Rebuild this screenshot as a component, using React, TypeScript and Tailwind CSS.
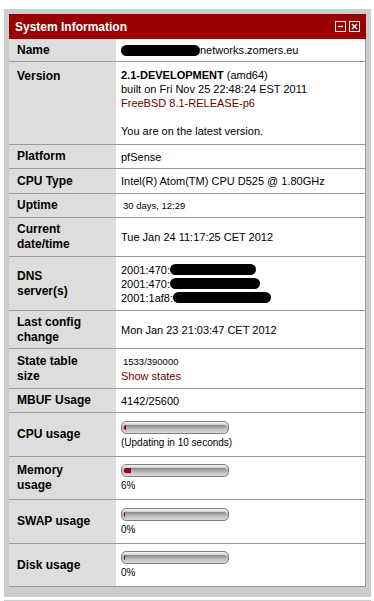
import React from "react";

const font = { fontFamily: '"Liberation Sans", Arial, sans-serif' };

function Blob({ w }: { w: number }) {
  return (
    <span
      className="inline-block h-[11px] rounded-full bg-black align-middle"
      style={{ width: w }}
    />
  );
}

function Bar({ fill }: { fill: number }) {
  return (
    <div className="flex h-[13px] w-[108px] items-center rounded-[5px] border border-[#808080] bg-gradient-to-b from-[#f4f4f4] via-[#b0b0b0] to-[#dcdcdc] px-[2px]">
      <div className="flex h-[5px] w-full items-stretch rounded-[2px] bg-gradient-to-b from-[#858585] via-[#a8a8a8] to-[#c8c8c8]">
        <div className="rounded-l-[2px] bg-[#990000]" style={{ width: fill }} />
      </div>
    </div>
  );
}

function Row({
  h,
  label,
  children,
}: {
  h: number;
  label: React.ReactNode;
  children: React.ReactNode;
}) {
  return (
    <div className="flex border-b border-[#9a9a9a]" style={{ height: h }}>
      <div className="flex w-[107px] shrink-0 items-center bg-[#dddddd] pl-[8px] text-[12px] font-bold leading-[15px] text-black">
        <div>{label}</div>
      </div>
      <div className="flex flex-1 items-center border-r border-[#9a9a9a] bg-white pl-[5px] text-[11px] leading-[14px] text-black">
        <div>{children}</div>
      </div>
    </div>
  );
}

export default function App() {
  return (
    <div className="h-[601px] overflow-hidden bg-white pt-[9px]" style={font}>
      <div className="ml-[4px] mr-[3px] bg-[#cccccc] px-[5px] pb-[10px] pt-[5px]">
        <div className="flex h-[25px] items-center justify-between bg-[#990000] pl-[6px] pr-[6px]">
          <span className="text-[12px] font-bold text-white">System Information</span>
          <div className="flex gap-[3px]">
            <svg width="11" height="11" viewBox="0 0 11 11">
              <rect x="0.5" y="0.5" width="10" height="10" fill="none" stroke="white" />
              <line x1="3" y1="5.5" x2="8" y2="5.5" stroke="white" strokeWidth="1.3" />
            </svg>
            <svg width="11" height="11" viewBox="0 0 11 11">
              <rect x="0.5" y="0.5" width="10" height="10" fill="none" stroke="white" />
              <path d="M3 3 L8 8 M8 3 L3 8" stroke="white" strokeWidth="1.2" />
            </svg>
          </div>
        </div>

        <Row h={23} label="Name">
          <span className="flex items-center">
            <Blob w={79} />
            <span>networks.zomers.eu</span>
          </span>
        </Row>

        <Row h={83} label={<span className="block pb-[54px]">Version</span>}>
          <div>
            <b>2.1-DEVELOPMENT</b> (amd64)
          </div>
          <div>built on Fri Nov 25 22:48:24 EST 2011</div>
          <div className="text-[#6b0000]">FreeBSD 8.1-RELEASE-p6</div>
          <div>&nbsp;</div>
          <div>You are on the latest version.</div>
        </Row>

        <Row h={24} label="Platform">
          pfSense
        </Row>
        <Row h={25} label="CPU Type">
          Intel(R) Atom(TM) CPU D525 @ 1.80GHz
        </Row>
        <Row h={24} label="Uptime">
          <span className="pl-[2px] text-[9.5px]">30 days, 12:29</span>
        </Row>
        <Row
          h={39}
          label={
            <>
              Current
              <br />
              date/time
            </>
          }
        >
          Tue Jan 24 11:17:25 CET 2012
        </Row>
        <Row
          h={54}
          label={
            <>
              DNS
              <br />
              server(s)
            </>
          }
        >
          <div className="flex h-[14px] items-center">
            <span>2001:470:</span>
            <Blob w={86} />
          </div>
          <div className="flex h-[14px] items-center">
            <span>2001:470:</span>
            <Blob w={90} />
          </div>
          <div className="flex h-[14px] items-center">
            <span>2001:1af8:</span>
            <Blob w={98} />
          </div>
        </Row>
        <Row
          h={38}
          label={
            <>
              Last config
              <br />
              change
            </>
          }
        >
          Mon Jan 23 21:03:47 CET 2012
        </Row>
        <Row
          h={40}
          label={
            <>
              State table
              <br />
              size
            </>
          }
        >
          <div className="pl-[2px] text-[9.5px] leading-[15px]">1533/390000</div>
          <div className="text-[#6b0000]">Show states</div>
        </Row>
        <Row h={24} label="MBUF Usage">
          4142/25600
        </Row>
        <Row h={44} label="CPU usage">
          <Bar fill={2} />
          <div className="mt-[3px] text-[10px] leading-[12px]">(Updating in 10 seconds)</div>
        </Row>
        <Row
          h={43}
          label={
            <>
              Memory
              <br />
              usage
            </>
          }
        >
          <Bar fill={7} />
          <div className="mt-[3px] text-[10px] leading-[12px]">6%</div>
        </Row>
        <Row h={44} label="SWAP usage">
          <Bar fill={1} />
          <div className="mt-[3px] text-[10px] leading-[12px]">0%</div>
        </Row>
        <Row h={43} label="Disk usage">
          <Bar fill={1} />
          <div className="mt-[3px] text-[10px] leading-[12px]">0%</div>
        </Row>
      </div>
      <div className="ml-[4px] mr-[3px] mt-[3px] h-[1px] bg-[#cccccc]" />
    </div>
  );
}
